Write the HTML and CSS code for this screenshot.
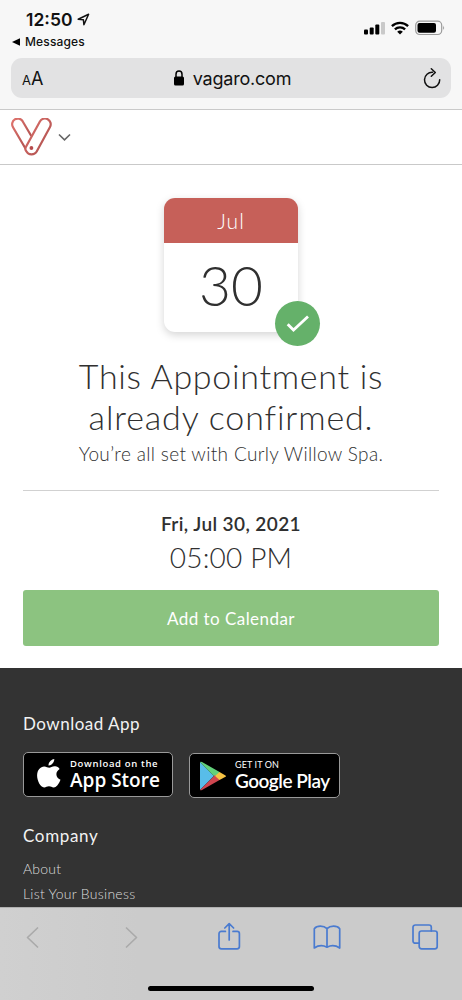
FILE: index.html
```html
<!DOCTYPE html>
<html lang="en">
<head>
<meta charset="utf-8">
<meta name="viewport" content="width=device-width, initial-scale=1">
<title>Appointment confirmed</title>
<link rel="stylesheet" href="styles.css">
</head>
<body>
<div class="phone">
  <header class="browser-top">
    <div class="status">
      <div class="clock"><span>12:50</span>
        <svg width="13" height="13" viewBox="0 0 13 13"><path d="M1.2 6.3 11.6 1.3 6.9 11.8 6.4 6.8Z" fill="none" stroke="#111" stroke-width="1.5" stroke-linejoin="round"/></svg>
      </div>
      <div class="signals">
        <svg width="21" height="14" viewBox="0 0 21 14"><rect x="0" y="8.5" width="4" height="5" rx="1"/><rect x="5.7" y="6.5" width="4" height="7" rx="1"/><rect x="11.3" y="3.5" width="4" height="10" rx="1"/><rect x="17" y="1" width="4" height="12.5" rx="1" fill="#c9c9c9"/></svg>
        <svg width="18" height="14" viewBox="0 0 18 14"><g fill="none" stroke="#000" stroke-width="2.3"><path d="M.9 5.1a11.6 11.6 0 0 1 16.2 0"/><path d="M3.9 8.4a7.2 7.2 0 0 1 10.2 0"/></g><path d="M6.2 10.7a4.1 4.1 0 0 1 5.6 0L9 13.5Z"/></svg>
        <svg width="30" height="16" viewBox="0 0 30 16"><rect x=".7" y="1.2" width="26" height="13.3" rx="4" fill="none" stroke="#9b9b9b" stroke-width="1.2"/><rect x="2.5" y="3" width="18.5" height="9.7" rx="2"/><path d="M28.2 5.6q1.7 2.2 0 4.4Z" fill="#8e8e8e"/></svg>
      </div>
    </div>
    <div class="back-app"><svg width="8" height="8" viewBox="0 0 8 8"><path d="M0 4 8 .3V7.7Z"/></svg><span>Messages</span></div>
    <div class="address">
      <div class="text-size"><span class="small-a">A</span><span class="big-a">A</span></div>
      <div class="domain"><svg width="10" height="16" viewBox="0 0 10 16"><rect x="0" y="6.6" width="10" height="8.9" rx="1.5"/><path d="M2 8V4.2a3 3.2 0 0 1 6 0V8" fill="none" stroke="#000" stroke-width="1.5"/></svg><span>vagaro.com</span></div>
      <svg width="18" height="22" viewBox="0 0 18 22"><path d="M9.6 5.3A7.6 7.6 0 1 0 16.7 12.7" fill="none" stroke="#111" stroke-width="1.5" stroke-linecap="round"/><path d="m8.3 1.7 4 3.8-4 3.8" fill="none" stroke="#111" stroke-width="1.5" stroke-linecap="round" stroke-linejoin="round"/></svg>
    </div>
  </header>

  <nav class="site-nav">
    <svg width="42" height="38" viewBox="0 0 42 38">
      <defs><linearGradient id="brand" x1="0" y1="0" x2="1" y2="1"><stop offset="0" stop-color="#e0736d"/><stop offset="1" stop-color="#a84c4b"/></linearGradient></defs>
      <g fill="none" stroke="url(#brand)" stroke-width="2.2" stroke-linejoin="round">
        <path d="M14.600 30.800 2 9.200A5.600 5.600 0 0 1 11.600 3.200L20.300 18"/>
        <path d="M14.600 29.500 28.900 3.500A5.700 5.700 0 0 1 39 9L25.700 33.500A6 6 0 0 1 15.300 33.200Q13.700 31.200 14.600 29.500Z"/>
      </g><circle cx="20.4" cy="30" r="1.9" fill="#b64b4c"/>
    </svg>
    <svg width="13" height="9" viewBox="0 0 13 9"><path d="m1 1.5 5.500 5.300L12 1.500" fill="none" stroke="#666" stroke-width="1.6"/></svg>
  </nav>

  <main class="confirmation">
    <div class="calendar">
      <div class="month">Jul</div>
      <div class="day">30</div>
      <div class="check"><svg width="24" height="20" viewBox="0 0 24 20"><path d="m1.700 10.200 5.800 5.800L22 2.500" fill="none" stroke="#fff" stroke-width="2.8"/></svg></div>
    </div>
    <h1><span class="line-one">This Appointment is</span><br><span class="line-two">already confirmed.</span></h1>
    <p class="lead">You’re all set with Curly Willow Spa.</p>
    <section class="when">
      <p class="date">Fri, Jul 30, 2021</p>
      <p class="time">05:00 PM</p>
      <button class="add" type="button"><span>Add to Calendar</span></button>
    </section>
  </main>

  <footer class="site-footer">
    <h2 class="download">Download App</h2>
    <div class="stores">
      <a class="store apple">
        <svg width="24" height="29" viewBox="0 0 24 29" fill="#fff"><path d="M17.3 0C17.5 3.3 14.6 6.500 11.500 6.400 11.200 3.400 14.200.3 17.300 0ZM22.600 10C17.800 13 18.600 19 23.500 20.700 21.600 25.600 18.800 28.600 16.700 28.400 14.800 28.100 14 27.200 12 27.200 9.900 27.200 9 28.300 7.200 28.400 3.600 28.600.1 21.800.1 16.500.1 11 3.500 7.500 7.200 7.400 9.300 7.400 10.800 8.700 12.200 8.700 13.700 8.700 15.400 7.100 18.100 7.300 20 7.400 21.600 8.300 22.600 10Z"/></svg>
        <span class="store-text"><small>Download on the</small><strong>App Store</strong></span>
      </a>
      <a class="store google">
        <svg width="27" height="30" viewBox="0 0 27 30"><path d="M0 1v28L14 15Z" fill="#58bde9"/><path d="M0 1Q.8.3 2 1L20 11.300 15 16Z" fill="#63d17b"/><path d="M0 29Q.8 29.700 2 29L20 18.700 15 14Z" fill="#cf4650"/><path d="m19.500 11 6 3.400q1.200.7 0 1.400l-6 3.300L15 15Z" fill="#f6c343"/></svg>
        <span class="store-text"><small>GET IT ON</small><strong>Google Play</strong></span>
      </a>
    </div>
    <h2 class="company">Company</h2>
    <ul><li class="about">About</li><li class="list">List Your Business</li></ul>
  </footer>

  <div class="browser-bottom">
    <div class="tools">
      <svg width="28" height="30" viewBox="0 0 28 30"><path class="disabled" d="M18.500 6 8.500 15.500l10 9.500"/></svg>
      <svg width="28" height="30" viewBox="0 0 28 30"><path class="disabled" d="m9.500 6 10 9.500-10 9.500"/></svg>
      <svg width="28" height="30" viewBox="0 0 28 30"><path d="M10.400 9.400H6.300a2.300 2.300 0 0 0-2.300 2.300v12.800a2.300 2.300 0 0 0 2.300 2.300h15.800a2.300 2.300 0 0 0 2.300-2.300V11.700a2.300 2.300 0 0 0-2.300-2.300H18M14.200 18V1.800M9.800 6l4.400-4.300L18.600 6"/></svg>
      <svg width="28" height="30" viewBox="0 0 28 30"><path d="M14 6.700Q11.500 4.200 7.400 4.200 3.300 4.200 1.300 6.700V26Q7.500 21.900 14 25.200 20.500 21.900 26.700 26V6.700Q24.700 4.200 20.600 4.200 16.500 4.200 14 6.700V25"/></svg>
      <svg width="28" height="30" viewBox="0 0 28 30"><path d="M8 21.200H4.300A2.300 2.300 0 0 1 2 18.900V5.300A2.300 2.300 0 0 1 4.300 3H18A2.300 2.300 0 0 1 20.300 5.300V9"/><rect x="8.200" y="9" width="18" height="17.800" rx="2.300"/></svg>
    </div>
    <div class="home"></div>
  </div>
</div>
</body>
</html>
```

FILE: styles.css
```css
* { box-sizing: border-box; }
body { margin: 0; font-family: Lato, sans-serif; color: #303030; background: #fff; }
h1, h2, p, ul { margin: 0; padding: 0; font-weight: 300; }
svg { display: block; flex: none; }
.phone { width: 462px; height: 1000px; display: flex; flex-direction: column; overflow: hidden; }

.browser-top { flex: none; height: 110px; background: #f7f7f7; border-bottom: 1px solid #cacaca; font-family: Inter, sans-serif; color: #111; }
.status { height: 34px; display: flex; justify-content: space-between; padding: 0 19px 0 26px; }
.clock { display: flex; align-items: center; gap: 5px; padding-top: 5px; font-size: 17.5px; font-weight: 600; letter-spacing: 0; }
.signals { display: flex; align-items: center; gap: 6px; padding-top: 21px; margin-right: -2px; }
.back-app { display: flex; align-items: center; gap: 5px; height: 15px; padding-left: 12px; font-size: 12px; font-weight: 500; letter-spacing: .15px; }
.address { height: 40px; margin: 9px 11px 0; padding: 0 10px 0 11px; border-radius: 11px; background: #e2e2e3; display: flex; align-items: center; justify-content: space-between; }
.text-size { width: 30px; line-height: 24px; padding-top: 2px; white-space: nowrap; }
.small-a { font-size: 13px; }
.big-a { font-size: 18px; }
.domain { display: flex; align-items: center; gap: 9px; margin-right: 10px; font-size: 18px; letter-spacing: -.2px; }

.site-nav { flex: none; height: 55px; border-bottom: 1px solid #c9c9c9; display: flex; align-items: center; gap: 5px; padding-left: 11px; }

.confirmation { flex: none; height: 503px; padding: 33px 23px 0; text-align: center; }
.calendar { position: relative; width: 134px; height: 134px; margin: 0 auto; border-radius: 11px; background: #fff; box-shadow: 0 3px 8px rgba(0, 0, 0, .17); }
.month { height: 45px; border-radius: 11px 11px 0 0; background: #c66059; color: #fff; font-size: 21px; font-weight: 300; line-height: 45px; letter-spacing: 1px; }
.day { font-size: 55px; font-weight: 300; line-height: 85px; letter-spacing: 0; }
.check { position: absolute; right: -22px; bottom: -14px; width: 45px; height: 45px; border-radius: 50%; background: #65b16a; display: flex; align-items: center; justify-content: center; }
h1 { margin-top: 23px; font-size: 34px; line-height: 41px; white-space: nowrap; }
.line-one { letter-spacing: .7px; }
.line-two { letter-spacing: .85px; }
.lead { font-size: 19px; line-height: 28px; margin-top: 3px; letter-spacing: .34px; white-space: nowrap; }
.when { margin-top: 22px; padding-top: 18px; border-top: 1px solid #d1d1d1; }
.date { font-size: 19px; line-height: 29px; font-weight: 600; letter-spacing: .4px; }
.time { font-size: 28px; line-height: 39px; letter-spacing: .2px; }
.add { display: block; width: 100%; height: 56px; margin-top: 13px; padding: 0; border: 0; border-radius: 3px; background: #8cc380; color: #fff; font: 400 17px Lato, sans-serif; letter-spacing: .45px; }

.site-footer { flex: none; height: 239px; padding: 41px 23px 0; background: #333; color: #f2f2f2; overflow: hidden; }
h2 { font-size: 17px; line-height: 30px; font-weight: 400; letter-spacing: .5px; }
.company { margin-top: 23px; letter-spacing: .65px; }
.stores { display: flex; align-items: flex-start; gap: 16px; margin-top: 13px; }
.store { display: flex; width: 151px; height: 45px; border: 1px solid #999; border-radius: 5px; background: #000; color: #fff; }
.apple { width: 150px; padding: 6px 0 0 13px; gap: 9px; font-family: "Open Sans", sans-serif; }
.google { margin-top: 1px; padding: 7px 0 0 10px; gap: 8px; }
.store-text { display: flex; flex-direction: column; white-space: nowrap; }
.store small { font-size: 9.5px; line-height: 10px; font-weight: 600; letter-spacing: .65px; }
.store strong { font-size: 19px; line-height: 23px; font-weight: 600; letter-spacing: 0; }
.google small { font-size: 9px; line-height: 8px; font-weight: 400; letter-spacing: .1px; }
.google strong { font-size: 19px; line-height: 23px; letter-spacing: -.5px; }
ul { list-style: none; font-size: 14px; line-height: 25px; margin-top: 5px; color: #ddd; }
.about { letter-spacing: .2px; }
.list { letter-spacing: .28px; }

.browser-bottom { flex: 1; border-top: 1px solid #b0b0b0; background: linear-gradient(90deg, #d0d0d0, #cbcbcb 30%); }
.tools { display: flex; justify-content: space-between; padding: 14px 23px 0 19px; }
.tools svg { fill: none; stroke: #4a7bd0; stroke-width: 1.7; stroke-linecap: round; stroke-linejoin: round; }
.tools .disabled { stroke: #aaa; }
.home { width: 166px; height: 5px; margin: 34px auto 0; border-radius: 3px; background: #000; }
```
